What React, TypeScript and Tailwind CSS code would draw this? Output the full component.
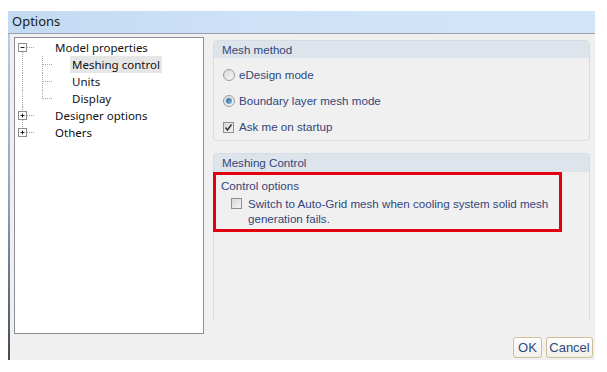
import type { ReactNode } from 'react';

type TreeGlyph = 'openRoot' | 'child' | 'lastChild' | 'closedMid' | 'closedLast';

function Expander({ x, open }: { x: number; open: boolean }) {
  return (
    <g>
      <rect x={x + 0.5} y={4.5} width={8} height={8} fill="#fff" stroke="#8c8c8c" />
      <line x1={x + 2.5} y1={8.5} x2={x + 6.5} y2={8.5} stroke="#222" />
      {!open && <line x1={x + 4.5} y1={6.5} x2={x + 4.5} y2={10.5} stroke="#222" />}
    </g>
  );
}

// dotted connector lines + expander box for one tree row
function RowGlyph({ kind, width }: { kind: TreeGlyph; width: number }) {
  const dot = { stroke: '#a8a8a8', strokeDasharray: '1 1' };
  return (
    <svg width={width} height={17} className="shrink-0">
      {kind === 'openRoot' && (
        <>
          <Expander x={3} open />
          <line x1={12} y1={8.5} x2={20} y2={8.5} {...dot} />
          <line x1={7.5} y1={13} x2={7.5} y2={17} {...dot} />
        </>
      )}
      {(kind === 'child' || kind === 'lastChild') && (
        <>
          <line x1={7.5} y1={0} x2={7.5} y2={17} {...dot} />
          <line x1={27.5} y1={0} x2={27.5} y2={kind === 'child' ? 17 : 9} {...dot} />
          <line x1={28} y1={8.5} x2={37} y2={8.5} {...dot} />
        </>
      )}
      {(kind === 'closedMid' || kind === 'closedLast') && (
        <>
          <line x1={7.5} y1={0} x2={7.5} y2={4} {...dot} />
          {kind === 'closedMid' && <line x1={7.5} y1={13} x2={7.5} y2={17} {...dot} />}
          <Expander x={3} open={false} />
          <line x1={12} y1={8.5} x2={20} y2={8.5} {...dot} />
        </>
      )}
    </svg>
  );
}

function TreeRow({ kind, label, selected }: { kind: TreeGlyph; label: string; selected?: boolean }) {
  const child = kind === 'child' || kind === 'lastChild';
  return (
    <div className="flex h-[17px] items-center">
      <RowGlyph kind={kind} width={child ? 55 : 38} />
      <span className={`px-[2px] leading-[17px] ${selected ? 'bg-[#e6e6e6]' : ''}`}>{label}</span>
    </div>
  );
}

function Radio({ checked }: { checked?: boolean }) {
  return (
    <span className="flex h-[12px] w-[12px] shrink-0 items-center justify-center rounded-full border border-[#9c9c9c] bg-gradient-to-br from-[#d9d9d9] to-[#f7f7f7]">
      {checked && (
        <span className="h-[6px] w-[6px] rounded-full bg-gradient-to-br from-[#2a6ea6] to-[#7fb6de]" />
      )}
    </span>
  );
}

function Check({ checked }: { checked?: boolean }) {
  return (
    <span className="flex h-[11px] w-[11px] shrink-0 items-center justify-center border border-[#8e8f8f] bg-gradient-to-br from-[#d8d8d8] to-[#f4f4f4]">
      {checked && (
        <svg width={9} height={9} viewBox="0 0 9 9">
          <path d="M1.5 4.5 L3.5 7 L7.5 1.5" fill="none" stroke="#333" strokeWidth={1.5} />
        </svg>
      )}
    </span>
  );
}

function GroupHeader({ children, h }: { children: ReactNode; h: string }) {
  return (
    <div className={`flex ${h} items-center rounded-t-[3px] bg-[#dee4eb] pl-[8px]`}>{children}</div>
  );
}

export default function App() {
  return (
    <div className="h-[372px] w-[607px] bg-white pl-[8px] pt-[11px]">
      <div className="w-[587px]">
        <div className="flex h-[23px] items-center border-b border-[#98a2ac] bg-gradient-to-r from-[#c3daf3] via-[#cfe3f8] to-[#d3e6f9] pl-[4px] font-['Noto_Sans',sans-serif] text-[13px] text-[#1b1b1b]">
          Options
        </div>
        <div className="flex h-[326px] bg-[#f0f0f0]">
          <div className="w-[2px] bg-gradient-to-b from-[#b5cde8] via-[#8ea4bd] to-[#434c56]" />
          <div className="flex flex-1 flex-col pl-[4px] pr-[2px] pt-[3px]">
            <div className="flex h-[297px]">
              <div className="w-[190px] border border-[#8b8f95] bg-white pt-[1px] font-['Noto_Sans',sans-serif] text-[11.5px] text-[#111]">
                <TreeRow kind="openRoot" label="Model properties" />
                <TreeRow kind="child" label="Meshing control" selected />
                <TreeRow kind="child" label="Units" />
                <TreeRow kind="lastChild" label="Display" />
                <TreeRow kind="closedMid" label="Designer options" />
                <TreeRow kind="closedLast" label="Others" />
              </div>
              <div className="ml-[9px] flex w-[377px] flex-col pt-[3px] font-['Liberation_Sans',Arial,sans-serif] text-[11.6px] text-[#33467a]">
                <div className="h-[101px] rounded-[4px] border border-[#d6dce4]">
                  <GroupHeader h="h-[17px]">Mesh method</GroupHeader>
                  <div className="pl-[9px] pt-[4px]">
                    <div className="flex h-[26px] items-center gap-[4px]">
                      <Radio />
                      <span>eDesign mode</span>
                    </div>
                    <div className="flex h-[26px] items-center gap-[4px]">
                      <Radio checked />
                      <span>Boundary layer mesh mode</span>
                    </div>
                    <div className="flex h-[26px] items-center gap-[5px]">
                      <Check checked />
                      <span>Ask me on startup</span>
                    </div>
                  </div>
                </div>
                <div className="mt-[12px] h-[167px] rounded-t-[4px] border border-b-0 border-[#d6dce4]">
                  <GroupHeader h="h-[18px]">Meshing Control</GroupHeader>
                  <div className="-ml-px w-[349px] border-[3px] border-[#e3000f] pb-[3px] pl-[5px] pt-[4px]">
                    <div className="leading-[14px]">Control options</div>
                    <div className="ml-[10px] mt-[3px] flex items-start gap-[6px]">
                      <span className="mt-[2px]">
                        <Check />
                      </span>
                      <span className="leading-[15px]">
                        Switch to Auto-Grid mesh when cooling system solid mesh
                        <br />
                        generation fails.
                      </span>
                    </div>
                  </div>
                </div>
              </div>
            </div>
            <div className="mt-[3px] flex h-[21px] justify-end gap-[4px] font-['Liberation_Sans',Arial,sans-serif] text-[13px] text-[#2e4985]">
              <button type="button" className="w-[29px] rounded-[3px] border border-[#cdbf98] bg-gradient-to-b from-white to-[#f3f0e8]">
                OK
              </button>
              <button type="button" className="w-[47px] rounded-[3px] border border-[#cdbf98] bg-gradient-to-b from-white to-[#f3f0e8]">
                Cancel
              </button>
            </div>
          </div>
        </div>
      </div>
    </div>
  );
}
